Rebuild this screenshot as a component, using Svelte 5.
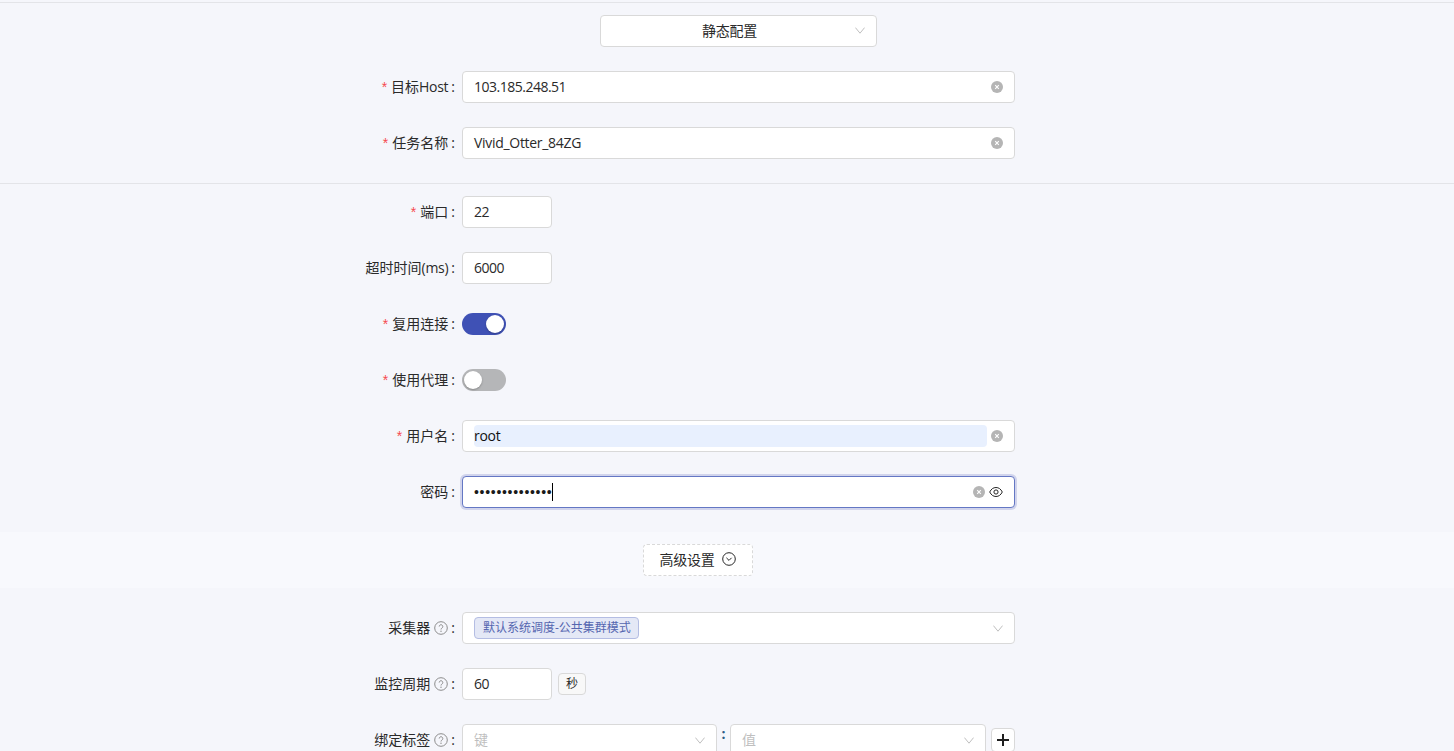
<script>
  // rows above the first divider
  const topRows = [
    { label: "目标", latin: "Host", value: "103.185.248.51", digits: true },
    { label: "任务名称", latin: "", value: "Vivid_Otter_84ZG", digits: false },
  ];
</script>

{#snippet clear()}
  <svg class="clear" viewBox="0 0 12 12" width="12" height="12">
    <circle cx="6" cy="6" r="6" fill="#b5b5b5" />
    <path d="M4.200 4.200l3.600 3.600M7.800 4.200l-3.600 3.600" stroke="#fff" stroke-width="1.100" />
  </svg>
{/snippet}

{#snippet chevron()}
  <svg class="chev" viewBox="0 0 10 7" width="10" height="7">
    <path d="M.4.600L5 6.200 9.600.600" fill="none" stroke="#bfbfbf" stroke-width="1" />
  </svg>
{/snippet}

{#snippet help()}
  <svg class="help" viewBox="0 0 14 14" width="14" height="14">
    <circle cx="7" cy="7" r="6.300" fill="none" stroke="#8c8c8c" stroke-width="1" />
    <path d="M5.200 5.500a1.800 1.800 0 1 1 2.700 1.600c-.6.350-.9.700-.9 1.400" fill="none" stroke="#8c8c8c" stroke-width="1" />
    <circle cx="7" cy="10.300" r=".7" fill="#8c8c8c" />
  </svg>
{/snippet}

<div class="page">
  <div class="line"></div>

  <div class="row">
    <div class="label"></div>
    <div class="control center">
      <div class="box mode">
        <span class="val">静态配置</span>
        {@render chevron()}
      </div>
    </div>
  </div>

  {#each topRows as r}
    <div class="row">
      <div class="label"><i>*</i>{r.label}<span class="latin">{r.latin}</span><b>:</b></div>
      <div class="control">
        <div class="box">
          <span class="val" class:digits={r.digits}>{r.value}</span>
          {@render clear()}
        </div>
      </div>
    </div>
  {/each}

  <div class="line"></div>

  <div class="row">
    <div class="label"><i>*</i>端口<b>:</b></div>
    <div class="control"><div class="box num"><span class="val digits">22</span></div></div>
  </div>

  <div class="row">
    <div class="label">超时时间<span class="latin">(ms)</span><b>:</b></div>
    <div class="control"><div class="box num"><span class="val digits">6000</span></div></div>
  </div>

  <div class="row">
    <div class="label"><i>*</i>复用连接<b>:</b></div>
    <div class="control"><div class="switch on"><span></span></div></div>
  </div>

  <div class="row">
    <div class="label"><i>*</i>使用代理<b>:</b></div>
    <div class="control"><div class="switch"><span></span></div></div>
  </div>

  <div class="row">
    <div class="label"><i>*</i>用户名<b>:</b></div>
    <div class="control">
      <div class="box autofill">
        <span class="val">root</span>
        {@render clear()}
      </div>
    </div>
  </div>

  <div class="row last">
    <div class="label">密码<b>:</b></div>
    <div class="control">
      <div class="box focus">
        <span class="dots">••••••••••••••</span><span class="caret"></span>
        <span class="grow"></span>
        {@render clear()}
        <svg class="eye" viewBox="0 0 14 12" width="14" height="12">
          <path d="M.7 6C2.200 3 4.300 1.500 7 1.500S11.800 3 13.300 6c-1.500 3-3.600 4.500-6.300 4.500S2.200 9 .7 6z" fill="none" stroke="#262626" stroke-width="1" />
          <circle cx="7" cy="6" r="2.100" fill="none" stroke="#262626" stroke-width="1" />
        </svg>
      </div>
    </div>
  </div>

  <div class="band">
    <div class="advanced">
      <span class="val">高级设置</span>
      <svg viewBox="0 0 14 14" width="14" height="14">
        <circle cx="7" cy="7" r="6.300" fill="none" stroke="#262626" stroke-width="1" />
        <path d="M4.400 5.800L7 8.400l2.600-2.600" fill="none" stroke="#262626" stroke-width="1" />
      </svg>
    </div>
  </div>

  <div class="row">
    <div class="label">采集器{@render help()}<b>:</b></div>
    <div class="control">
      <div class="box">
        <span class="tag">默认系统调度-公共集群模式</span>
        <span class="grow"></span>
        {@render chevron()}
      </div>
    </div>
  </div>

  <div class="row">
    <div class="label">监控周期{@render help()}<b>:</b></div>
    <div class="control">
      <div class="box num"><span class="val digits">60</span></div>
      <span class="unit">秒</span>
    </div>
  </div>

  <div class="row">
    <div class="label">绑定标签{@render help()}<b>:</b></div>
    <div class="control tags">
      <div class="box key">
        <span class="val ph">键</span>
        <span class="grow"></span>
        {@render chevron()}
      </div>
      <span class="sep">:</span>
      <div class="box value">
        <span class="val ph">值</span>
        <span class="grow"></span>
        {@render chevron()}
      </div>
      <div class="plus">
        <svg viewBox="0 0 12 12" width="12" height="12">
          <path d="M6 0v12M0 6h12" stroke="#1f1f1f" stroke-width="2" />
        </svg>
      </div>
    </div>
  </div>
</div>

<style>
  :global(body) {
    margin: 0;
    overflow: hidden;
    background: #f5f6fb;
    font-family: "Open Sans", "Noto Sans CJK SC", sans-serif;
    font-size: 14px;
    color: #2a2a2a;
  }

  .page {
    height: 751px;
    overflow: hidden;
    padding-top: 2px;
    box-sizing: border-box;
  }

  .line {
    height: 1px;
    background: #e3e4e8;
    margin-bottom: 12px;
  }

  .row {
    display: flex;
    height: 32px;
    margin-bottom: 24px;
    align-items: center;
  }

  .row.last {
    margin-bottom: 0;
  }

  .label {
    width: 455px;
    flex: none;
    display: flex;
    justify-content: flex-end;
    align-items: center;
    line-height: 32px;
    white-space: nowrap;
  }

  .label i {
    color: #f5494f;
    font-style: normal;
    margin-right: 4px;
    font-family: "Liberation Sans", sans-serif;
  }

  .label b {
    font-weight: 400;
    margin-left: 3px;
  }

  .latin {
    letter-spacing: -0.3px;
  }

  .control {
    margin-left: 7px;
    width: 553px;
    flex: none;
    display: flex;
    align-items: center;
  }

  .center {
    justify-content: center;
  }

  .box {
    height: 32px;
    width: 100%;
    box-sizing: border-box;
    display: flex;
    align-items: center;
    justify-content: space-between;
    background: #fff;
    border: 1px solid #d9d9d9;
    border-radius: 4px;
    padding: 0 11px;
  }

  .mode {
    width: 277px;
    position: relative;
    justify-content: center;
    padding: 0 29px 0 11px;
  }

  .mode .chev {
    position: absolute;
    right: 11px;
    top: 11px;
  }

  .num {
    width: 90px;
    flex: none;
  }

  .val {
    white-space: nowrap;
    letter-spacing: -0.3px;
    margin-top: -2px;
  }

  .val.digits {
    letter-spacing: -0.5px;
  }

  .ph {
    color: #bfbfbf;
  }

  .grow {
    flex: 1;
  }

  .clear,
  .chev {
    flex: none;
  }

  .switch {
    width: 44px;
    height: 22px;
    border-radius: 11px;
    background: #b5b6b8;
    position: relative;
  }

  .switch span {
    position: absolute;
    top: 2px;
    left: 2px;
    width: 18px;
    height: 18px;
    border-radius: 50%;
    background: #fff;
    box-shadow: 0 1px 2px rgba(0, 0, 0, 0.25);
  }

  .switch.on {
    background: #3f51b5;
  }

  .switch.on span {
    left: 24px;
  }

  .autofill .val {
    flex: 1;
    background: #e8f0fe;
    border-radius: 4px;
    height: 22px;
    line-height: 21px;
    margin: 0 4px 0 0;
    color: #111;
  }

  .focus {
    border-color: #6477c4;
    box-shadow: 0 0 0 2px rgba(63, 81, 181, 0.2);
    justify-content: flex-start;
  }

  .dots {
    letter-spacing: 0.7px;
    color: #1a1a1a;
    font-family: "Liberation Sans", sans-serif;
    white-space: nowrap;
  }

  .caret {
    width: 1px;
    height: 18px;
    background: #000;
  }

  .eye {
    margin-left: 4px;
    flex: none;
  }

  .band {
    height: 56px;
    margin-top: 24px;
    margin-bottom: 24px;
    display: flex;
    align-items: center;
    justify-content: center;
    padding-right: 58px;
    background: #f8f9fd;
  }

  .advanced {
    width: 110px;
    height: 32px;
    box-sizing: border-box;
    border: 1px dashed #d9d9d9;
    border-radius: 4px;
    background: #fff;
    display: flex;
    align-items: center;
    justify-content: center;
    gap: 8px;
  }

  .advanced svg {
    margin-top: -2px;
  }

  .tag {
    height: 22px;
    line-height: 19px;
    box-sizing: border-box;
    padding: 0 7px 0 8px;
    font-size: 12px;
    color: #5566b0;
    background: #e4e8f6;
    border: 1px solid #b4bde3;
    border-radius: 4px;
    white-space: nowrap;
  }

  .help {
    margin-left: 4px;
    flex: none;
  }

  .unit {
    margin-left: 6px;
    width: 28px;
    height: 22px;
    box-sizing: border-box;
    border: 1px solid #d9d9d9;
    border-radius: 4px;
    background: #f8f8f8;
    font-size: 12px;
    line-height: 19px;
    text-align: center;
  }

  .key {
    width: 255px;
    flex: none;
  }

  .value {
    width: 256px;
    flex: none;
  }

  .sep {
    width: 13px;
    flex: none;
    text-align: center;
    color: #2a5a85;
    font-weight: 700;
    line-height: 20px;
  }

  .plus {
    margin-left: 5px;
    margin-top: 4px;
    width: 24px;
    height: 24px;
    flex: none;
    box-sizing: border-box;
    border: 1px solid #d9d9d9;
    border-radius: 4px;
    background: #fff;
    display: flex;
    align-items: center;
    justify-content: center;
  }

  .tags {
    align-items: flex-start;
  }
</style>
